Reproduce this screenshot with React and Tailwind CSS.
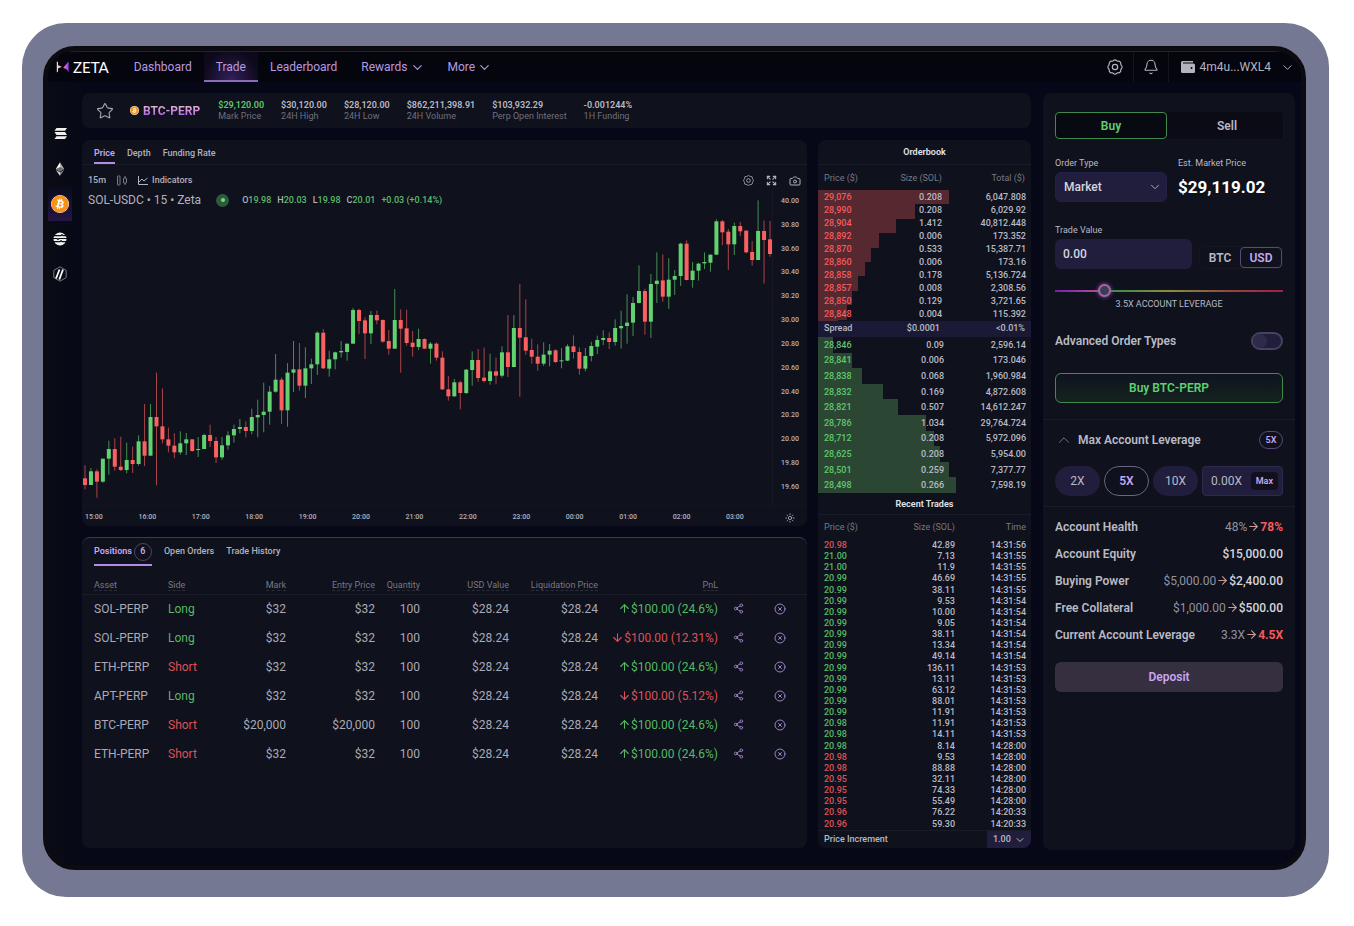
import { useState } from "react";
import { ChevronDown, ChevronUp, Star, Bell, Expand, Camera, Sun, Share2, CircleX, ArrowRight, ArrowUp, ArrowDown } from "lucide-react";
import { FaBitcoin } from "react-icons/fa";

// [up, body top, body bottom, wick top, wick bottom]
const candles = [
  [0, 865, 885, 826, 898], [1, 844, 885, 834, 885], [0, 844, 875, 838, 923], [1, 806, 875, 806, 878],
  [1, 777, 806, 752, 854], [0, 777, 830, 745, 842], [0, 830, 840, 740, 843], [1, 810, 840, 758, 850],
  [0, 810, 822, 770, 849], [1, 754, 822, 736, 827], [0, 754, 797, 642, 828], [1, 681, 797, 642, 797],
  [0, 681, 709, 548, 886], [0, 709, 748, 595, 760], [0, 748, 767, 713, 787], [0, 767, 787, 730, 805],
  [1, 760, 787, 724, 794], [1, 748, 760, 729, 795], [0, 748, 783, 748, 785], [1, 777, 780, 741, 801],
  [1, 735, 777, 731, 777], [0, 735, 753, 704, 771], [0, 753, 802, 741, 819], [1, 766, 802, 741, 809],
  [1, 736, 766, 724, 779], [1, 717, 736, 704, 758], [1, 711, 717, 687, 730], [0, 711, 723, 694, 742],
  [1, 681, 723, 656, 733], [1, 675, 682, 629, 742], [1, 665, 675, 578, 727], [1, 605, 665, 588, 704],
  [1, 569, 605, 492, 608], [0, 569, 661, 562, 702], [1, 548, 661, 519, 710], [1, 538, 548, 453, 606],
  [0, 538, 587, 459, 602], [1, 535, 587, 472, 624], [1, 523, 535, 506, 582], [1, 428, 523, 424, 555],
  [0, 428, 535, 417, 537], [1, 508, 536, 482, 560], [1, 487, 508, 485, 538], [1, 483, 487, 453, 503],
  [1, 461, 486, 461, 512], [1, 360, 461, 354, 461], [0, 360, 393, 356, 432], [0, 391, 430, 382, 507],
  [1, 375, 430, 363, 462], [0, 375, 391, 362, 403], [0, 390, 455, 388, 458], [0, 453, 476, 420, 494],
  [1, 390, 476, 297, 476], [0, 390, 416, 358, 548], [0, 415, 459, 359, 467], [0, 458, 471, 423, 500],
  [1, 447, 471, 416, 480], [0, 447, 476, 445, 477], [1, 461, 476, 456, 521], [0, 461, 503, 457, 512],
  [0, 503, 598, 484, 600], [0, 598, 619, 558, 632], [1, 577, 619, 567, 620], [0, 577, 609, 572, 658],
  [1, 539, 609, 537, 612], [1, 510, 540, 484, 587], [0, 510, 564, 477, 575], [0, 563, 573, 473, 578],
  [1, 544, 573, 491, 584], [0, 544, 557, 503, 583], [1, 487, 557, 469, 563], [0, 487, 531, 375, 561],
  [1, 414, 531, 375, 531], [0, 414, 443, 282, 620], [0, 442, 482, 328, 494], [0, 480, 500, 446, 521],
  [0, 500, 521, 463, 542], [1, 494, 521, 457, 528], [1, 482, 494, 462, 529], [0, 481, 516, 478, 519],
  [1, 511, 514, 474, 535], [1, 469, 512, 463, 513], [0, 469, 486, 436, 506], [0, 486, 536, 472, 554],
  [1, 498, 536, 474, 544], [1, 468, 498, 455, 514], [1, 450, 470, 437, 492], [1, 444, 450, 421, 465],
  [0, 444, 456, 427, 477], [1, 414, 456, 388, 467], [1, 408, 415, 362, 476], [1, 398, 408, 313, 461],
  [1, 339, 398, 321, 438], [1, 303, 339, 226, 340], [0, 303, 395, 296, 434], [1, 282, 395, 252, 444],
  [1, 272, 282, 187, 339], [0, 271, 320, 193, 335], [1, 269, 320, 205, 357], [1, 258, 269, 240, 315],
  [1, 161, 258, 158, 288], [0, 161, 270, 151, 271], [1, 242, 270, 216, 293], [1, 221, 242, 218, 272],
  [1, 216, 220, 187, 237], [1, 194, 218, 194, 245], [1, 94, 194, 88, 194], [0, 94, 127, 90, 166],
  [0, 125, 163, 117, 240], [1, 108, 163, 98, 195], [0, 108, 124, 96, 138], [0, 122, 187, 121, 190],
  [0, 186, 210, 153, 227], [1, 123, 210, 31, 210], [0, 123, 150, 92, 281], [0, 148, 192, 93, 200],
];

const priceTicks = ["40.00", "30.80", "30.60", "30.40", "30.20", "30.00", "20.80", "20.60", "20.40", "20.20", "20.00", "19.80", "19.60"];
const timeTicks = ["15:00", "16:00", "17:00", "18:00", "19:00", "20:00", "21:00", "22:00", "23:00", "00:00", "01:00", "02:00", "03:00"];

const stats = [
  ["$29,120.00", "Mark Price"],
  ["$30,120.00", "24H High"],
  ["$28,120.00", "24H Low"],
  ["$862,211,398.91", "24H Volume"],
  ["$103,932.29", "Perp Open Interest"],
  ["-0.001244%", "1H Funding"],
];

// price, size, total, depth in %
const asks = [
  ["29,076", "0.208", "6,047.808", 61.5],
  ["28,990", "0.208", "6,029.92", 45.5],
  ["28,904", "1.412", "40,812.448", 36.5],
  ["28,892", "0.006", "173.352", 28.8],
  ["28,870", "0.533", "15,387.71", 25],
  ["28,860", "0.006", "173.16", 22],
  ["28,858", "0.178", "5,136.724", 19],
  ["28,857", "0.008", "2,308.56", 16],
  ["28,850", "0.129", "3,721.65", 13.8],
  ["28,848", "0.004", "115.392", 9.5],
];

const bids = [
  ["28,846", "0.09", "2,596.14", 7],
  ["28,841", "0.006", "173.046", 16],
  ["28,838", "0.068", "1,960.984", 20.7],
  ["28,832", "0.169", "4,872.608", 30.5],
  ["28,821", "0.507", "14,612.247", 37.7],
  ["28,786", "1.034", "29,764.724", 50.7],
  ["28,712", "0.208", "5,972.096", 54.5],
  ["28,625", "0.208", "5,954.00", 57.3],
  ["28,501", "0.259", "7,377.77", 61.5],
  ["28,498", "0.266", "7,598.19", 65],
];

const trades = [
  ["20.98", "42.89", "14:31:56", 0],
  ["21.00", "7.13", "14:31:55", 1],
  ["21.00", "11.9", "14:31:55", 1],
  ["20.99", "46.69", "14:31:55", 1],
  ["20.99", "38.11", "14:31:55", 1],
  ["20.99", "9.53", "14:31:54", 1],
  ["20.99", "10.00", "14:31:54", 1],
  ["20.99", "9.05", "14:31:54", 1],
  ["20.99", "38.11", "14:31:54", 1],
  ["20.99", "13.34", "14:31:54", 1],
  ["20.99", "49.14", "14:31:54", 1],
  ["20.99", "136.11", "14:31:53", 1],
  ["20.99", "13.11", "14:31:53", 1],
  ["20.99", "63.12", "14:31:53", 1],
  ["20.99", "88.01", "14:31:53", 1],
  ["20.99", "11.91", "14:31:53", 1],
  ["20.98", "11.91", "14:31:53", 1],
  ["20.98", "14.11", "14:31:53", 1],
  ["20.98", "8.14", "14:28:00", 1],
  ["20.98", "9.53", "14:28:00", 0],
  ["20.98", "88.88", "14:28:00", 0],
  ["20.95", "32.11", "14:28:00", 0],
  ["20.95", "74.33", "14:28:00", 0],
  ["20.95", "55.49", "14:28:00", 0],
  ["20.96", "76.22", "14:20:33", 0],
  ["20.96", "59.30", "14:20:33", 0],
];

const positions = [
  ["SOL-PERP", "Long", "$32", "$100.00 (24.6%)", 1],
  ["SOL-PERP", "Long", "$32", "$100.00 (12.31%)", 0],
  ["ETH-PERP", "Short", "$32", "$100.00 (24.6%)", 1],
  ["APT-PERP", "Long", "$32", "$100.00 (5.12%)", 0],
  ["BTC-PERP", "Short", "$20,000", "$100.00 (24.6%)", 1],
  ["ETH-PERP", "Short", "$32", "$100.00 (24.6%)", 1],
];

const account = [
  ["Account Health", "48%", "78%", true],
  ["Account Equity", null, "$15,000.00", false],
  ["Buying Power", "$5,000.00", "$2,400.00", false],
  ["Free Collateral", "$1,000.00", "$500.00", false],
  ["Current Account Leverage", "3.3X", "4.5X", true],
];

function Gear({ className }) {
  return (
    <svg viewBox="0 0 24 24" className={className} fill="none" stroke="currentColor" strokeWidth="1.8" strokeLinejoin="round">
      <path d="M9.5 2.6a3.3 3.3 0 0 1 5 0l1 .5 1.7.1a3.3 3.3 0 0 1 3.4 3.5l.2 1.6.7 1.2a3.3 3.3 0 0 1 0 5l-.7 1.2-.2 1.6a3.3 3.3 0 0 1-3.4 3.5l-1.7.1-1 .5a3.3 3.3 0 0 1-5 0l-1-.5-1.7-.1a3.3 3.3 0 0 1-3.4-3.5l-.2-1.6-.7-1.2a3.3 3.3 0 0 1 0-5l.7-1.2.2-1.6a3.3 3.3 0 0 1 3.4-3.5l1.7-.1z" />
      <circle cx="12" cy="12" r="4" />
    </svg>
  );
}

function Header() {
  return (
    <header className="flex h-[31px] items-center border-t border-[#2c1748] bg-[#05050d] text-xs text-[#b79be0]">
      <a href="#home" aria-label="Zeta" className="ml-2 flex items-center gap-1 text-white">
        <svg width="13" height="12" viewBox="0 0 13 12">
          <defs>
            <linearGradient id="mark" x1="0" x2="1" y1="0" y2="0">
              <stop offset="0" stopColor="#fbe3cf" />
              <stop offset=".45" stopColor="#e88fb4" />
              <stop offset="1" stopColor="#9b3cf0" />
            </linearGradient>
          </defs>
          <path d="M.8.5L2 1v3.300L6 5.800 2 7.500v3L.8 11.500zM12.600.5v11L11 8.500 7.200 6.800z" fill="url(#mark)" />
        </svg>
        <span className="font-['Lato',sans-serif] text-[15px] leading-4">ZETA</span>
      </a>
      <nav className="ml-[13px] flex h-full items-center">
        <a href="#dashboard" className="px-3">Dashboard</a>
        <a href="#trade" className="flex h-full items-center border-b-2 border-[#8a6bb8] bg-[radial-gradient(ellipse_at_bottom,#33205a,#0d091a_75%)] px-3 pt-[2px]">
          Trade
        </a>
        <a href="#leaderboard" className="px-3">Leaderboard</a>
        <button className="flex items-center gap-[2px] pr-[11px] pl-3">
          Rewards <ChevronDown size={15} strokeWidth={1.800} />
        </button>
        <button className="flex items-center gap-[2px] px-3">
          More <ChevronDown size={15} strokeWidth={1.800} />
        </button>
      </nav>
      <div className="ml-auto flex h-full items-center text-[#b4b4bf]">
        <button aria-label="Settings" className="flex h-full w-[35px] items-center justify-center">
          <Gear className="size-4" />
        </button>
        <button aria-label="Notifications" className="flex h-full w-9 items-center justify-center border-x border-[#14141f]">
          <Bell size={16} strokeWidth={1.600} />
        </button>
        <button className="flex items-center pr-[6px] pl-3">
          <svg width="14" height="12" viewBox="0 0 14 12" fill="currentColor">
            <path d="M1.5 0H12v1.6H2v.8h10.5A1.5 1.5 0 0 1 14 3.9v6.6a1.5 1.5 0 0 1-1.500 1.500h-11A1.500 1.500 0 0 1 0 10.500v-9A1.500 1.500 0 0 1 1.500 0z" />
            <circle cx="10.500" cy="7" r="1" fill="#05050d" />
          </svg>
          <span className="ml-[5px]">4m4u...WXL4</span>
          <ChevronDown size={15} strokeWidth={1.500} className="ml-[9px]" />
        </button>
      </div>
    </header>
  );
}

function Sidebar() {
  const item = "flex h-[35px] w-6 items-center justify-center";
  return (
    <aside className="flex w-[34px] shrink-0 flex-col bg-linear-to-r from-[#0a0c14] to-[#060817] pt-[34px]">
      <button aria-label="SOL" className={item}>
        <svg width="13" height="11" viewBox="0 0 13 11" fill="#f0f0f0">
          <path d="M2.500 0H13l-2 2.800H.5zM.5 4.100H11l2 2.800H2.500zM2.500 8.200H13L11 11H.5z" />
        </svg>
      </button>
      <button aria-label="ETH" className={item}>
        <svg width="10" height="14" viewBox="0 0 12 16">
          <path d="M6 0l5 8-5 3z" fill="#b5b5b5" />
          <path d="M6 0L1 8l5 3z" fill="#fff" />
          <path d="M1 9.300L6 12.300V16z" fill="#e2e2e2" />
          <path d="M11 9.300L6 12.300V16z" fill="#8d8d8d" />
          <path d="M6 5.500l5 2.500-5 3-5-3z" fill="#6d6d6d" />
        </svg>
      </button>
      <button aria-label="BTC" className="flex h-[35px] w-6 items-center justify-center bg-linear-to-b from-[#0a0a1a] to-[#251545]">
        <FaBitcoin size={18} className="rounded-full bg-white text-[#f7931a]" />
      </button>
      <button aria-label="APT" className={item}>
        <svg width="14" height="14" viewBox="0 0 14 14">
          <circle cx="7" cy="7" r="6.500" fill="#f2f2f2" />
          <path d="M0 3.600h8l1-1 1 1h4M0 6.500h4l1 1 1-1h8M0 9.700h7l1-1 1 1h5" stroke="#0a0c14" strokeWidth="1.200" fill="none" />
        </svg>
      </button>
      <button aria-label="ARB" className={item}>
        <svg width="14" height="16" viewBox="0 0 14 16" fill="none">
          <path d="M7 .8l6.200 3.600v7.200L7 15.200.8 11.600V4.400z" stroke="#77777f" />
          <path d="M6.500 3.500L3 12.500M10 3.500L6.300 13.500" stroke="#fff" strokeWidth="1.800" />
        </svg>
      </button>
    </aside>
  );
}

function Ticker() {
  return (
    <section className="flex h-[35px] items-center rounded-lg bg-[#0f111d] pl-[14px]">
      <button aria-label="Favourite" className="text-[#a5a5b0]">
        <Star size={18} strokeWidth={1.500} />
      </button>
      <FaBitcoin size={9} className="ml-4 rounded-full bg-white text-[#f7931a]" />
      <h1 className="ml-1 bg-linear-to-t from-[#a43cf0] to-[#f2c6c0] bg-clip-text text-xs font-bold text-transparent">BTC-PERP</h1>
      <dl className="ml-[18px] flex gap-[17px] text-[9px] leading-[11px]">
        {stats.map(([value, label], i) => (
          <div key={label} className="flex flex-col-reverse">
            <dt className="text-[#6f707c]">{label}</dt>
            <dd className={i === 0 ? "font-semibold text-[#5fc86c]" : "font-semibold text-[#b9bac4]"}>{value}</dd>
          </div>
        ))}
      </dl>
    </section>
  );
}

function Chart() {
  return (
    <section className="rounded-lg bg-[#0f111d] text-[9px] text-[#b1b2bd]">
      <div className="flex h-[25px] gap-3 border-b border-[#191b28] px-3 font-medium">
        <button className="border-b-2 border-[#b58be8] pt-[6px] font-semibold text-[#c7a6f2]">Price</button>
        <button className="pt-1">Depth</button>
        <button className="pt-1">Funding Rate</button>
      </div>
      <div className="flex h-[25px] items-center pt-[6px] pr-[6px] pl-[6px] font-medium">
        <button>15m</button>
        <button aria-label="Candle style" className="ml-[11px] text-[#7d7e8a]">
          <svg width="10" height="11" viewBox="0 0 10 11" fill="none" stroke="currentColor">
            <rect x=".5" y="1" width="2.500" height="9" rx=".5" />
            <rect x="6.500" y="3" width="3" height="5" rx=".5" />
            <path d="M8 1v2M8 8v2" />
          </svg>
        </button>
        <button className="ml-[11px] flex items-center gap-1">
          <svg width="10" height="9" viewBox="0 0 10 9" fill="none" stroke="currentColor">
            <path d="M.5 0v8.500H10M1 6l3-3 2 2 3.500-3" />
          </svg>
          Indicators
        </button>
        <div className="ml-auto flex gap-3">
          <button aria-label="Chart settings"><Gear className="size-[11px]" /></button>
          <button aria-label="Fullscreen"><Expand size={11} strokeWidth={2.500} /></button>
          <button aria-label="Snapshot"><Camera size={12} /></button>
        </div>
      </div>
      <div className="relative flex">
        <div className="absolute top-0 left-[6px] flex h-5 items-center whitespace-nowrap">
          <h2 className="text-xs">SOL-USDC • 15 • Zeta</h2>
          <span className="ml-[15px] flex size-[13px] items-center justify-center rounded-full bg-[#2d5a3c]">
            <span className="size-1 rounded-full bg-[#6fdd7c]" />
          </span>
          <p className="ml-[13px] flex gap-[6px] pt-px font-medium text-[#5fb96b]">
            <span><span className="text-[#b1b2bd]">O</span>19.98</span>
            <span><span className="text-[#b1b2bd]">H</span>20.03</span>
            <span><span className="text-[#b1b2bd]">L</span>19.98</span>
            <span><span className="text-[#b1b2bd]">C</span>20.01</span>
            <span>+0.03 (+0.14%)</span>
          </p>
        </div>
        <svg viewBox="0 0 2070 945" preserveAspectRatio="none" className="h-[315px] min-w-0 flex-1">
          {candles.map(([up, top, bottom, high, low], i) => {
            const x = 9 + i * 17.87;
            return (
              <g key={i} fill={up ? "#62d170" : "#fb6060"}>
                <rect x={x - 1.5} y={high} width="3" height={low - high} opacity=".65" />
                <rect x={x - 6} y={top} width="12" height={bottom - top} />
              </g>
            );
          })}
        </svg>
        <ol className="flex w-[35px] flex-col justify-between border-l border-[#151724] pt-[6px] pb-[13px] pl-2 text-[7px] leading-[10px] font-medium">
          {priceTicks.map((t) => (
            <li key={t}>{t}</li>
          ))}
        </ol>
      </div>
      <div className="flex h-[21px] items-center border-t border-[#131522] pt-[3px] text-[7px] font-medium">
        <ol className="flex flex-1 justify-between pl-[3px]">
          {timeTicks.map((t) => (
            <li key={t}>{t}</li>
          ))}
        </ol>
        <button aria-label="Axis settings" className="mr-3 ml-[41px]">
          <Sun size={10} />
        </button>
      </div>
    </section>
  );
}

function Positions() {
  const th = "p-0 text-right font-normal";
  const label = "border-b border-dashed border-[#2a2c3a]";
  return (
    <section className="flex-1 rounded-lg border-t border-[#3c3a52] bg-[#0f111d] text-[#a9aab5]">
      <div className="flex h-7 items-stretch gap-3 px-3 text-[9px] font-medium">
        <button className="flex items-center gap-[2px] border-b-2 border-[#b58be8] pt-px font-semibold text-[#c7a6f2]">
          Positions
          <span className="flex size-[18px] items-center justify-center rounded-full border border-[#4b4560]">6</span>
        </button>
        <button className="text-[#b1b2bd]">Open Orders</button>
        <button className="text-[#b1b2bd]">Trade History</button>
      </div>
      <table className="mt-3 w-full table-fixed text-xs">
        <colgroup>
          <col className="w-[86px]" />
          <col className="w-[62px]" />
          <col className="w-[56px]" />
          <col className="w-[89px]" />
          <col className="w-[45px]" />
          <col className="w-[89px]" />
          <col className="w-[89px]" />
          <col className="w-[120px]" />
          <col className="w-[40px]" />
          <col className="w-[49px]" />
        </colgroup>
        <thead>
          <tr className="h-4 border-b border-[#1a1c29] text-[9px] leading-[11px] whitespace-nowrap text-[#777884]">
            <th className="p-0 pl-3 text-left font-normal"><span className={label}>Asset</span></th>
            <th className="p-0 text-left font-normal"><span className={label}>Side</span></th>
            <th className={th}><span className={label}>Mark</span></th>
            <th className={th}><span className={label}>Entry Price</span></th>
            <th className={th}><span className={label}>Quantity</span></th>
            <th className={th}><span className={label}>USD Value</span></th>
            <th className={th}><span className={label}>Liquidation Price</span></th>
            <th className={th}><span className={label}>PnL</span></th>
            <th className={th} />
            <th className={th} />
          </tr>
        </thead>
        <tbody>
          {positions.map(([asset, side, mark, pnl, up], i) => (
            <tr key={i} className="h-[29px] text-right whitespace-nowrap">
              <td className="p-0 pl-3 text-left">{asset}</td>
              <td className={side === "Long" ? "p-0 text-left text-[#57b964]" : "p-0 text-left text-[#dd5257]"}>{side}</td>
              <td className="p-0">{mark}</td>
              <td className="p-0">{mark}</td>
              <td className="p-0">100</td>
              <td className="p-0">$28.24</td>
              <td className="p-0">$28.24</td>
              <td className={up ? "p-0 text-[#57b964]" : "p-0 text-[#dd5257]"}>
                <span className="flex items-center justify-end">
                  {up ? <ArrowUp size={13} /> : <ArrowDown size={13} />}
                  {pnl}
                </span>
              </td>
              <td className="p-0 text-[#9c83c6]">
                <button aria-label="Share position" className="mx-auto block"><Share2 size={11} /></button>
              </td>
              <td className="p-0 pr-[5px] text-[#9c83c6]">
                <button aria-label="Close position" className="mx-auto block"><CircleX size={12} /></button>
              </td>
            </tr>
          ))}
        </tbody>
      </table>
    </section>
  );
}

function Depth({ rows, className, bar }) {
  return (
    <div className={className}>
      {rows.map((r) => (
        <div key={r[0]} className={bar} style={{ width: `${r[3]}%` }} />
      ))}
    </div>
  );
}

function Orderbook() {
  return (
    <section className="flex w-[213px] shrink-0 flex-col rounded-lg bg-[#0f111d] text-[9px] font-medium text-[#b9bac4]">
      <h2 className="h-[25px] border-b border-[#191b28] text-center leading-[25px] font-semibold text-[#e4e4ea]">Orderbook</h2>
      <div className="relative overflow-hidden">
        <Depth rows={asks} className="absolute inset-x-0 top-[25px] flex h-[144px] flex-col" bar="flex-1 bg-[#55292f]" />
        <table className="relative w-full table-fixed text-right leading-[13px]">
          <colgroup>
            <col className="w-[54px]" />
            <col className="w-[70px]" />
            <col />
          </colgroup>
          <thead>
            <tr className="h-[26px] text-[#777884]">
              <th className="p-0 pl-[6px] text-left font-normal">Price ($)</th>
              <th className="p-0 font-normal">Size (SOL)</th>
              <th className="p-0 pr-[6px] font-normal">Total ($)</th>
            </tr>
          </thead>
          <tbody>
            {asks.map(([price, size, total]) => (
              <tr key={price}>
                <td className="p-0 pl-[6px] text-left text-[#f45a5e]">{price}</td>
                <td className="p-0">{size}</td>
                <td className="p-0 pr-[5px]">{total}</td>
              </tr>
            ))}
          </tbody>
        </table>
      </div>
      <div className="grid h-4 grid-cols-[54px_68px_1fr] items-center bg-[#1a1a36] pr-[6px] text-right">
        <span className="pl-[6px] text-left">Spread</span>
        <span>$0.0001</span>
        <span>&lt;0.01%</span>
      </div>
      <div className="relative">
        <Depth rows={bids} className="absolute inset-0 flex flex-col" bar="flex-1 bg-[#2b4733]" />
        <table className="relative h-[156px] w-full table-fixed text-right leading-[14px]">
          <colgroup>
            <col className="w-[54px]" />
            <col className="w-[72px]" />
            <col />
          </colgroup>
          <tbody>
            {bids.map(([price, size, total]) => (
              <tr key={price}>
                <td className="p-0 pl-[6px] text-left text-[#5fc86c]">{price}</td>
                <td className="p-0">{size}</td>
                <td className="p-0 pr-[5px]">{total}</td>
              </tr>
            ))}
          </tbody>
        </table>
      </div>
      <h2 className="h-[22px] border-b border-[#191b28] text-center leading-[22px] font-semibold text-[#e4e4ea]">Recent Trades</h2>
      <table className="h-[315px] w-full table-fixed text-right leading-[11px]">
        <colgroup>
          <col className="w-[54px]" />
          <col className="w-[83px]" />
          <col />
        </colgroup>
        <thead>
          <tr className="h-[25px] text-[#777884]">
            <th className="p-0 pl-[6px] text-left font-normal">Price ($)</th>
            <th className="p-0 font-normal">Size (SOL)</th>
            <th className="p-0 pr-[5px] font-normal">Time</th>
          </tr>
        </thead>
        <tbody>
          {trades.map(([price, size, time, up], i) => (
            <tr key={i}>
              <td className={up ? "p-0 pl-[6px] text-left text-[#57b964]" : "p-0 pl-[6px] text-left text-[#dd5257]"}>{price}</td>
              <td className="p-0">{size}</td>
              <td className="p-0 pr-[5px]">{time}</td>
            </tr>
          ))}
        </tbody>
      </table>
      <div className="mt-auto flex h-[18px] items-stretch justify-between border-t border-[#191b28] pl-[6px]">
        <label htmlFor="increment" className="self-center">Price Increment</label>
        <div className="relative flex">
          <select id="increment" className="w-[44px] appearance-none rounded-br-lg bg-[#211d3d] pl-[6px]">
            <option>1.00</option>
          </select>
          <ChevronDown size={12} className="pointer-events-none absolute top-[3px] right-[5px]" />
        </div>
      </div>
    </section>
  );
}

function TradePanel() {
  const [amount, setAmount] = useState("0.00");
  const [leverage, setLeverage] = useState(20);
  const [custom, setCustom] = useState("0.00X");

  return (
    <section className="w-[252px] shrink-0 rounded-lg bg-[#0f111d] text-xs text-[#b9bac4]">
      <div className="px-3 pt-[19px]">
        <div className="grid h-[27px] grid-cols-2 gap-1 rounded bg-[#0a0b14] font-semibold">
          <button className="rounded border border-[#3f8a4d] bg-[#080a12] text-[#5fd06c]">Buy</button>
          <button>Sell</button>
        </div>

        <div className="mt-[19px] grid grid-cols-[112px_1fr] gap-x-[11px]">
          <label htmlFor="order-type" className="text-[9px] leading-[10px]">Order Type</label>
          <span className="text-[9px] leading-[10px]">Est. Market Price</span>
          <div className="relative mt-1">
            <select id="order-type" className="h-[30px] w-full appearance-none rounded-md border border-[#24204a] bg-[#211d3d] pl-2 font-medium text-[#d6d6de]">
              <option>Market</option>
            </select>
            <ChevronDown size={14} strokeWidth={1.500} className="pointer-events-none absolute top-2 right-[5px]" />
          </div>
          <strong className="self-center pt-1 text-[17px] leading-5 font-bold text-white">$29,119.02</strong>
        </div>

        <label htmlFor="trade-value" className="mt-[23px] block text-[9px] leading-[10px]">Trade Value</label>
        <div className="mt-1 flex items-end justify-between gap-[7px]">
          <input
            id="trade-value"
            value={amount}
            onChange={(e) => setAmount(e.target.value)}
            className="h-[30px] min-w-0 flex-1 rounded-md bg-[#211d3d] px-2 font-medium text-[#d6d6de]"
          />
          <div className="flex h-[23px] rounded border border-[#141622] font-semibold">
            <button className="w-10">BTC</button>
            <button className="w-[42px] rounded border border-[#574a78] text-[#c7a6f2]">USD</button>
          </div>
        </div>

        <input
          type="range"
          id="leverage"
          min="0"
          max="100"
          value={leverage}
          onChange={(e) => setLeverage(e.target.value)}
          className="mt-[15px] block h-[14px] w-full appearance-none bg-transparent [&::-webkit-slider-runnable-track]:h-[2px] [&::-webkit-slider-runnable-track]:bg-[linear-gradient(to_right,#7a1fb0,#b0508f_20%,#3f8a4d_26%,#8a8a45_50%,#8f4a40_75%,#a01f45)] [&::-webkit-slider-thumb]:-mt-[6px] [&::-webkit-slider-thumb]:size-[13px] [&::-webkit-slider-thumb]:appearance-none [&::-webkit-slider-thumb]:rounded-full [&::-webkit-slider-thumb]:border-2 [&::-webkit-slider-thumb]:border-[#a06a9c] [&::-webkit-slider-thumb]:bg-[#3a3d58] [&::-webkit-slider-thumb]:shadow-[0_0_4px_#9a4fc0]"
        />
        <label htmlFor="leverage" className="mt-px block text-center text-[9px] leading-[11px]">3.5X ACCOUNT LEVERAGE</label>

        <div className="mt-[21px] flex h-[19px] items-center justify-between">
          <label htmlFor="advanced" className="font-semibold">Advanced Order Types</label>
          <input
            id="advanced"
            type="checkbox"
            role="switch"
            className="h-[18px] w-8 appearance-none rounded-full border-2 border-[#474163] bg-[#211d3d] before:block before:size-[14px] before:rounded-full before:bg-[#2d2a4a] checked:before:ml-[14px]"
          />
        </div>

        <button className="mt-[23px] h-[30px] w-full rounded-md border border-[#3f8a4d] bg-linear-to-b from-[#0f131e] to-[#14231f] font-semibold text-[#5fd06c]">
          Buy BTC-PERP
        </button>
      </div>

      <div className="mt-4 border-y border-[#191b28] px-3 pt-[11px] pb-[10px]">
        <div className="flex h-[18px] items-center">
          <button aria-label="Collapse leverage" className="text-[#77758a]"><ChevronUp size={18} strokeWidth={1.300} /></button>
          <h2 className="ml-[5px] font-semibold">Max Account Leverage</h2>
          <span className="ml-auto flex h-[18px] w-6 items-center justify-center rounded-full border border-[#574a78] text-[9px] font-semibold text-[#c7a6f2]">5X</span>
        </div>
        <div className="mt-[17px] flex h-[30px] gap-1">
          <button className="w-[45px] rounded-full bg-[#211d3d]">2X</button>
          <button className="w-[45px] rounded-full border border-[#6a6580] font-semibold text-[#c7a6f2]">5X</button>
          <button className="w-[45px] rounded-full bg-[#211d3d]">10X</button>
          <div className="flex min-w-0 flex-1 items-center rounded border border-[#2e2a4c] bg-[#211d3d] pr-1 pl-2">
            <input
              aria-label="Custom leverage"
              value={custom}
              onChange={(e) => setCustom(e.target.value)}
              className="w-full min-w-0 bg-transparent"
            />
            <button className="h-[18px] shrink-0 rounded-sm bg-[#12101f] px-[5px] text-[9px] font-semibold text-[#c7a6f2]">Max</button>
          </div>
        </div>
      </div>

      <div className="px-3 pt-[6px]">
        <dl>
          {account.map(([label, from, to, warn]) => (
            <div key={label} className="flex h-[27px] items-center justify-between whitespace-nowrap">
              <dt className="font-semibold">{label}</dt>
              <dd className="flex items-center">
                {from && (
                  <>
                    <span className="text-[#9293a0]">{from}</span>
                    <ArrowRight size={13} className="text-[#c49a94]" />
                  </>
                )}
                <span className={warn ? "font-bold text-[#f45a5e]" : "font-medium text-[#d6d6de]"}>{to}</span>
              </dd>
            </div>
          ))}
        </dl>
        <button className="mt-[14px] h-[30px] w-full rounded-md bg-[#362f40] font-semibold text-[#c7a6f2]">Deposit</button>
      </div>
    </section>
  );
}

export default function App() {
  return (
    <div className="flex min-h-screen bg-white pt-[23px] pr-[25px] pb-[29px] pl-[22px] font-['Roboto',sans-serif]">
      <div className="flex flex-1 rounded-[44px] bg-[#757892] pt-[23px] pr-[23px] pb-[27px] pl-[21px]">
        <div className="flex flex-1 flex-col overflow-hidden rounded-[32px] border-[5px] border-[#0d0b12] bg-[#060817]">
          <Header />
          <div className="flex flex-1">
            <Sidebar />
            <main className="flex flex-1 gap-3 pt-[11px] pr-[6px] pb-[15px]">
              <div className="flex min-w-0 flex-1 flex-col gap-3 pb-[2px]">
                <Ticker />
                <div className="flex flex-1 gap-[11px]">
                  <div className="flex min-w-0 flex-1 flex-col gap-[11px]">
                    <Chart />
                    <Positions />
                  </div>
                  <Orderbook />
                </div>
              </div>
              <TradePanel />
            </main>
          </div>
        </div>
      </div>
    </div>
  );
}
